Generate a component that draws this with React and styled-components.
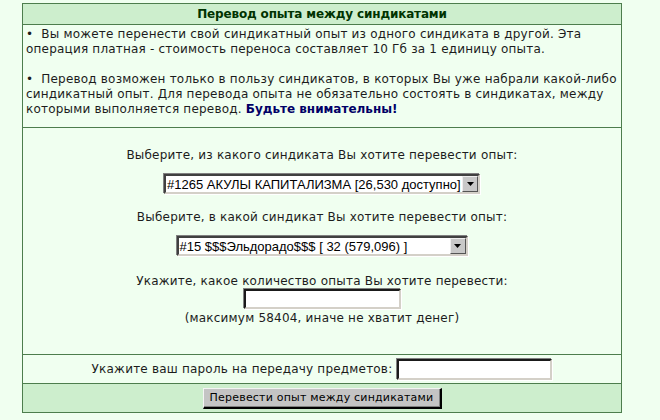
import React from "react";
import styled, { createGlobalStyle } from "styled-components";

const Global = createGlobalStyle`
  html, body { margin: 0; padding: 0; background: #f0fff0; }
  body { font-family: "DejaVu Sans", Verdana, sans-serif; font-size: 12px; letter-spacing: 0.2px; color: #1c1c1c; }
`;

const Panel = styled.div`
  margin: 3px 0 0 22px;
  width: 598px;
  border: 1px solid #4d7d4d;
  background: #f0fff0;
`;

const Header = styled.div`
  height: 20px;
  line-height: 20px;
  background: #cdeecd;
  color: #003300;
  font-weight: bold;
  letter-spacing: -0.15px;
  text-align: center;
`;

const Section = styled.div`
  border-top: 1px solid #4d7d4d;
  background: ${(p) => (p.$tint ? "#cdeecd" : "#f0fff0")};
  text-align: ${(p) => (p.$center ? "center" : "left")};
  padding: ${(p) => p.$pad || "0"};
`;

const Para = styled.p`
  margin: 0 0 ${(p) => p.$gap || 0}px;
  line-height: 15px;
`;

const Strong = styled.b`
  color: #000066;
  letter-spacing: 0;
`;

const Label = styled.div`
  line-height: 15px;
  margin-top: ${(p) => p.$mt || 0}px;
`;

const Select = styled.div`
  box-sizing: border-box;
  display: flex;
  align-items: center;
  width: ${(p) => p.$w}px;
  height: 20px;
  margin: ${(p) => p.$mt || 0}px auto 0;
  background: #fff;
  border-style: solid;
  border-width: 2px;
  border-color: #404040 #d4d0c8 #d4d0c8 #404040;
  box-shadow: -1px -1px 0 #808080, 1px 1px 0 #fff;
  font-family: "Liberation Sans", Arial, sans-serif;
  font-size: 13px;
  letter-spacing: 0;
  color: #000;
  text-align: left;
`;

const SelectText = styled.span`
  flex: 1;
  padding-left: 1px;
  white-space: nowrap;
  overflow: hidden;
`;

const Arrow = styled.span`
  box-sizing: border-box;
  width: 16px;
  height: 16px;
  background: #c8c8c8;
  border-style: solid;
  border-width: 1px;
  border-color: #eee #555 #555 #eee;
  display: flex;
  align-items: center;
  justify-content: center;
`;

const Input = styled.div`
  box-sizing: border-box;
  width: ${(p) => p.$w}px;
  height: ${(p) => p.$h || 20}px;
  margin: 0 ${(p) => (p.$inline ? 0 : "auto")};
  display: ${(p) => (p.$inline ? "inline-block" : "block")};
  flex: none;
  background: #fff;
  border-style: solid;
  border-width: 2px;
  border-color: #1a1a1a #d4d0c8 #d4d0c8 #1a1a1a;
  box-shadow: -1px -1px 0 #808080, 1px 1px 0 #fff;
`;

const PassRow = styled.div`
  display: flex;
  align-items: center;
  justify-content: center;
  gap: 5px;
  height: 28px;
`;

const Button = styled.div`
  box-sizing: border-box;
  width: 239px;
  height: 21px;
  margin: 0 auto;
  background: #c4c4c4;
  border-style: solid;
  border-width: 1px 2px 2px 1px;
  border-color: #f4f4f4 #000 #000 #f4f4f4;
  box-shadow: inset -1px -1px 0 #808080;
  font-size: 11px;
  line-height: 18px;
  text-align: center;
  white-space: nowrap;
  color: #000;
`;

const ArrowIcon = () => (
  <svg width="7" height="4" viewBox="0 0 7 4">
    <path d="M0 0h7L3.5 4z" fill="#000" />
  </svg>
);

export default function App() {
  return (
    <>
      <Global />
      <Panel>
        <Header>Перевод опыта между синдикатами</Header>
        <Section $pad="2px 3px 10px">
          <Para $gap={15}>
            •&nbsp; Вы можете перенести свой синдикатный опыт из одного синдиката в другой. Эта операция платная - стоимость переноса составляет 10 Гб за 1 единицу опыта.
          </Para>
          <Para>
            •&nbsp; Перевод возможен только в пользу синдикатов, в которых Вы уже набрали какой-либо синдикатный опыт. Для перевода опыта не обязательно состоять в синдикатах, между которыми выполняется перевод. <Strong>Будьте внимательны!</Strong>
          </Para>
        </Section>
        <Section $center $pad="20px 0 28px">
          <Label>Выберите, из какого синдиката Вы хотите перевести опыт:</Label>
          <Select $w={316} $mt={11}>
            <SelectText>#1265 АКУЛЫ КАПИТАЛИЗМА [26,530 доступно]</SelectText>
            <Arrow><ArrowIcon /></Arrow>
          </Select>
          <Label $mt={16}>Выберите, в какой синдикат Вы хотите перевести опыт:</Label>
          <Select $w={291} $mt={11}>
            <SelectText>#15 $$$Эльдорадо$$$ [ 32 (579,096) ]</SelectText>
            <Arrow><ArrowIcon /></Arrow>
          </Select>
          <Label $mt={18}>Укажите, какое количество опыта Вы хотите перевести:</Label>
          <Input $w={157} />
          <Label $mt={2}>(максимум 58404, иначе не хватит денег)</Label>
        </Section>
        <Section>
          <PassRow>
            <span>Укажите ваш пароль на передачу предметов:</span>
            <Input $inline $w={155} $h={21} />
          </PassRow>
        </Section>
        <Section $tint $pad="4px 0 3px">
          <Button>Перевести опыт между синдикатами</Button>
        </Section>
      </Panel>
    </>
  );
}
